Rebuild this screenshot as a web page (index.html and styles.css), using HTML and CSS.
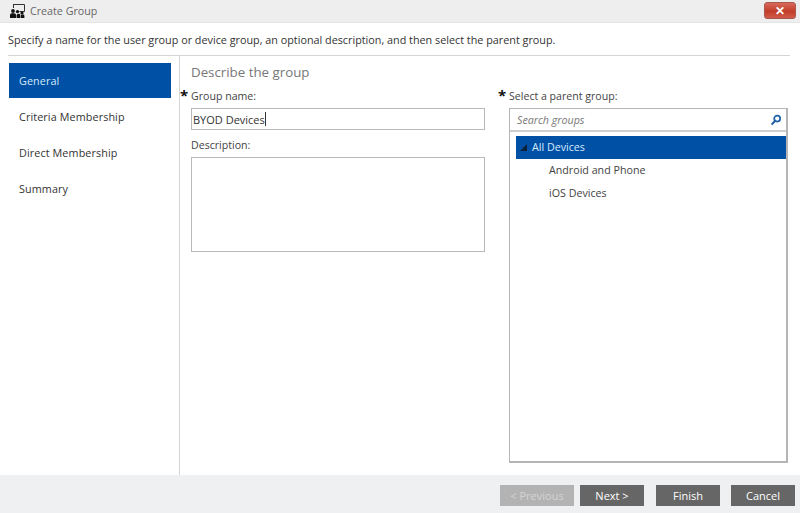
FILE: index.html
```html
<!DOCTYPE html>
<html lang="en">
<head>
    <meta charset="UTF-8">
    <meta name="viewport" content="width=device-width, initial-scale=1.0">
    <title>Create Group</title>
    <link rel="stylesheet" href="styles.css">
</head>
<body>
    <div class="dialog">
        <header class="titlebar">
            <div class="title">
                <svg class="title-icon" width="15" height="14" viewBox="0 0 15 14">
                    <path d="M3.5 0.5h11v7h-5" fill="none" stroke="#333" stroke-width="1"/>
                    <path d="M3.5 0v4" stroke="#333" stroke-width="1"/>
                    <circle cx="3" cy="7" r="1.9" fill="#111"/>
                    <path d="M0 14v-3q0-1.8 1.8-1.8h2.4q1.8 0 1.8 1.8v3z" fill="#111"/>
                    <circle cx="7.5" cy="7.6" r="1.7" fill="#111"/>
                    <path d="M6.6 14v-2.6q0-1.6 1.4-1.6h1q1.3 0 1.3 1.6v2.6z" fill="#111"/>
                    <circle cx="12" cy="9" r="1.6" fill="#111"/>
                    <path d="M10.8 14v-2q0-1.4 1.2-1.4h1q1.4 0 1.4 1.4v2z" fill="#111"/>
                </svg>
                <span>Create Group</span>
            </div>
            <button class="close" type="button">&#10005;</button>
        </header>

        <p class="intro">Specify a name for the user group or device group, an optional description, and then select the parent group.</p>

        <div class="content">
            <nav class="steps">
                <div class="step active">General</div>
                <div class="step">Criteria Membership</div>
                <div class="step">Direct Membership</div>
                <div class="step">Summary</div>
            </nav>

            <main class="panel">
                <h2>Describe the group</h2>
                <div class="columns">
                    <div class="col-left">
                        <label class="field-label"><span class="star">*</span>Group name:</label>
                        <div class="textbox">BYOD Devices<span class="caret"></span></div>
                        <label class="field-label desc-label">Description:</label>
                        <div class="textarea"></div>
                    </div>
                    <div class="col-right">
                        <label class="field-label"><span class="star">*</span>Select a parent group:</label>
                        <div class="picker">
                            <div class="search">
                                <span>Search groups</span>
                                <svg width="12" height="12" viewBox="0 0 12 12">
                                    <circle cx="7.2" cy="4.6" r="3" fill="none" stroke="#1f5fa8" stroke-width="1.7"/>
                                    <path d="M5 7l-3.4 3.6" stroke="#1f5fa8" stroke-width="2" fill="none"/>
                                </svg>
                            </div>
                            <ul class="tree">
                                <li class="selected"><span class="arrow"></span>All Devices</li>
                                <li class="child">Android and Phone</li>
                                <li class="child">iOS Devices</li>
                            </ul>
                        </div>
                    </div>
                </div>
            </main>
        </div>

        <footer class="footer">
            <button class="btn prev" type="button" disabled>&lt; Previous</button>
            <button class="btn next" type="button">Next &gt;</button>
            <button class="btn finish" type="button">Finish</button>
            <button class="btn cancel" type="button">Cancel</button>
        </footer>
    </div>
</body>
</html>
```

FILE: styles.css
```css
* {
    box-sizing: border-box;
}
html, body {
    margin: 0;
    height: 100%;
}
body {
    font-family: "Open Sans", "Noto Sans", Arial, sans-serif;
    font-size: 11px;
    color: #333;
    background: #fff;
    overflow: hidden;
}
.dialog {
    height: 513px;
    display: flex;
    flex-direction: column;
}
.titlebar {
    height: 23px;
    flex: none;
    background: #eeeeee;
    border-bottom: 1px solid #e4e4e4;
    display: flex;
    align-items: flex-start;
    justify-content: space-between;
    padding: 2px 4px 0 10px;
}
.title {
    display: flex;
    align-items: center;
    gap: 5px;
    color: #666;
    font-size: 10.7px;
    height: 17px;
}
.close {
    width: 32px;
    height: 17px;
    padding: 0;
    border: 1px solid #a8574c;
    border-radius: 3px;
    background: linear-gradient(#d8695a, #c23d2a 55%, #cf5a48);
    color: #fff;
    font-size: 12px;
    font-weight: bold;
    line-height: 14px;
}
.intro {
    margin: 0;
    height: 32px;
    padding: 9px 0 0 8px;
    font-size: 10.8px;
    line-height: 15px;
    color: #333;
    white-space: nowrap;
}
.content {
    flex: 1;
    display: flex;
    margin: 0 10px 0 8px;
    border-top: 1px solid #d4d4d4;
}
.steps {
    width: 172px;
    flex: none;
    padding: 7px 8px 0 1px;
    border-right: 1px solid #d4d4d4;
}
.step {
    height: 36px;
    padding-left: 10px;
    line-height: 35px;
    font-size: 10.8px;
    letter-spacing: 0.1px;
    color: #333;
}
.step.active {
    height: 35px;
    margin-bottom: 1px;
    background: #0050a5;
    color: #d5ebfb;
}
.panel {
    flex: 1;
    padding: 7px 0 0 11px;
}
h2 {
    margin: 0;
    font-size: 13.3px;
    font-weight: normal;
    line-height: 18px;
    color: #777;
}
.columns {
    display: flex;
    gap: 24px;
    margin-top: 7px;
}
.col-left {
    width: 294px;
}
.col-right {
    width: 279px;
}
.field-label {
    display: block;
    position: relative;
    height: 20px;
    line-height: 16px;
    color: #444;
    font-size: 10.6px;
}
.star {
    position: absolute;
    left: -11px;
    top: -1px;
    color: #111;
    font-size: 15px;
    line-height: 16px;
    font-weight: bold;
}
.textbox {
    height: 22px;
    padding-left: 1px;
    border: 1px solid #b9b9b9;
    font-size: 11px;
    color: #333;
    display: flex;
    align-items: center;
}
.caret {
    width: 1px;
    height: 14px;
    background: #333;
}
.desc-label {
    margin-top: 7px;
    height: 20px;
}
.textarea {
    height: 95px;
    border: 1px solid #b9b9b9;
}
.picker {
    height: 355px;
    border: 2px solid #b5b5b5;
    border-width: 1px 2px 2px 1px;
}
.search {
    height: 23px;
    border-bottom: 2px solid #cfcfcf;
    display: flex;
    align-items: center;
    justify-content: space-between;
    padding: 0 4px 0 7px;
    color: #777;
    font-style: italic;
    font-size: 10.7px;
}
.tree {
    list-style-type: none;
    margin: 4px 0 0 6px;
    padding: 0;
    width: 270px;
    font-size: 10.7px;
}
.tree li {
    height: 23px;
    line-height: 23px;
    color: #444;
}
.tree .selected {
    display: flex;
    align-items: center;
    padding-left: 4px;
    background: #0050a5;
    color: #d5ebfb;
}
.arrow {
    width: 0;
    height: 0;
    margin-right: 5px;
    border-left: 7px solid transparent;
    border-bottom: 7px solid #0a1f3c;
}
.tree .child {
    padding-left: 33px;
}
.footer {
    height: 38px;
    flex: none;
    background: #eef0f2;
    display: flex;
    padding: 10px 5px 0 500px;
}
.btn {
    width: 64px;
    height: 21px;
    padding: 0;
    border: 0;
    background: #666;
    color: #fff;
    font-family: inherit;
    font-size: 11px;
    margin-left: 12px;
}
.prev {
    width: 74px;
    margin-left: 0;
    background: #b3b3b3;
    color: #d4d4d4;
}
.next {
    margin-left: 6px;
}
.cancel {
    margin-left: 11px;
}
```
